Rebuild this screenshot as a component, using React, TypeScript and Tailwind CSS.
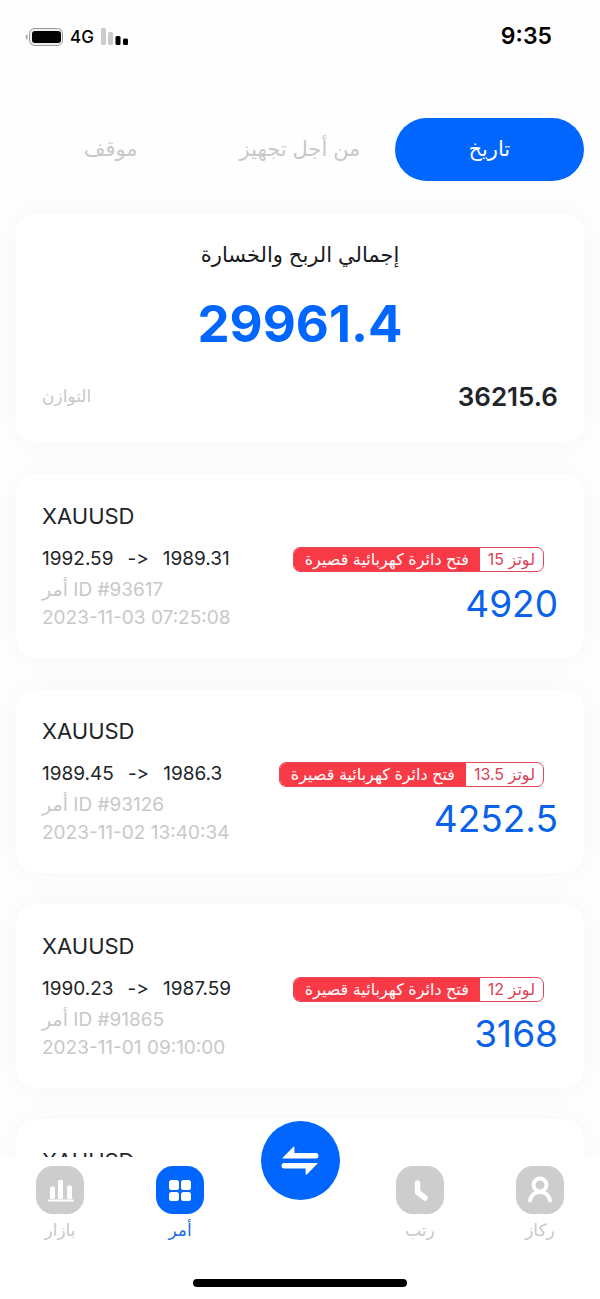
import { useState } from "react";
import type { ReactNode } from "react";

type Order = {
  id: number;
  symbol: string;
  open: string;
  close: string;
  date: string;
  lots: string;
  profit: string;
};

const orders: Order[] = [
  { id: 93617, symbol: "XAUUSD", open: "1992.59", close: "1989.31", date: "2023-11-03 07:25:08", lots: "15", profit: "4920" },
  { id: 93126, symbol: "XAUUSD", open: "1989.45", close: "1986.3", date: "2023-11-02 13:40:34", lots: "13.5", profit: "4252.5" },
  { id: 91865, symbol: "XAUUSD", open: "1990.23", close: "1987.59", date: "2023-11-01 09:10:00", lots: "12", profit: "3168" },
];

const tabs = ["موقف", "من أجل تجهيز", "تاريخ"];

function StatusBar() {
  return (
    <header className="flex h-[73px] shrink-0 items-center justify-between pl-6 pr-12">
      <div className="flex items-center gap-[7px]">
        <svg width="39" height="18" viewBox="0 0 39 18" aria-hidden="true">
          <path d="M3.5 6.5C1 7 1 11 3.5 11.5Z" fill="#999" />
          <rect x="5.5" y="0.5" width="33" height="17" rx="5" fill="#eee" stroke="#999" />
          <rect x="8" y="3" width="29" height="12" rx="3" fill="#000" />
        </svg>
        <span className="text-[17px] font-medium leading-6 text-black">4G</span>
        <svg width="28" height="18" viewBox="0 0 28 18" aria-hidden="true">
          <rect x="0" y="0" width="5" height="17" rx="1.5" fill="#ccc" />
          <rect x="7" y="4" width="5" height="13" rx="1.5" fill="#ccc" />
          <rect x="14.5" y="8" width="5" height="9" rx="1.5" fill="#000" />
          <rect x="22" y="10.5" width="5" height="6.5" rx="1.5" fill="#000" />
        </svg>
      </div>
      <time className="text-[23px] font-semibold text-black">9:35</time>
    </header>
  );
}

function Tabs() {
  const [active, setActive] = useState(2);

  return (
    <div className="mt-[45px] grid shrink-0 grid-cols-3 px-4" role="tablist">
      {tabs.map((label, i) => (
        <button
          key={label}
          type="button"
          role="tab"
          aria-selected={i === active}
          onClick={() => setActive(i)}
          className={`h-[63px] whitespace-nowrap rounded-full pb-[2px] text-[21px] ${
            i === active ? "bg-[#0166fe] text-white" : "text-[#c8c8c8]"
          }`}
        >
          {label}
        </button>
      ))}
    </div>
  );
}

function Card({ children }: { children: ReactNode }) {
  return (
    <section className="shrink-0 rounded-[20px] bg-white px-[26px] shadow-[0_0_32px_rgba(0,0,0,0.04)]">
      {children}
    </section>
  );
}

function Summary() {
  return (
    <Card>
      <div className="flex h-[230px] flex-col pt-6">
        <h1 className="text-center text-[21px] leading-9 text-[#17191c]">إجمالي الربح والخسارة</h1>
        <p className="mt-4 text-center text-[51px] font-bold leading-[70px] text-[#0166fe]">29961.4</p>
        <div className="mt-5 flex items-center justify-between">
          <span className="text-[17px] text-[#c8c8c8]">التوازن</span>
          <span className="text-[26px] font-semibold leading-9 text-[#212529]">36215.6</span>
        </div>
      </div>
    </Card>
  );
}

function Symbol({ name }: { name: string }) {
  return <h2 className="pt-6 text-[22px] leading-9 text-[#212529]">{name}</h2>;
}

function OrderCard({ order }: { order: Order }) {
  return (
    <Card>
      <div className="h-[184px]">
        <Symbol name={order.symbol} />
        <div className="mt-2 flex items-center justify-between pr-[14px] leading-[34px]">
          <p className="whitespace-pre text-[19px] text-[#212529] [font-variant-ligatures:none]">
            {order.open}
            <span className="px-[14px]">-&gt;</span>
            {order.close}
          </p>
          <div dir="rtl" className="flex h-[25px] overflow-hidden rounded-[7px] border border-[#e8475a] text-[16px] leading-[23px]">
            <span className="px-2 text-[#dc4055]">لوتز {order.lots}</span>
            <span className="bg-[#f83a46] px-[11px] text-white">فتح دائرة كهربائية قصيرة</span>
          </div>
        </div>
        <div className="flex items-center justify-between">
          <div className="text-[19px] leading-7 text-[#c8c8c8]">
            <p>أمر ID #{order.id}</p>
            <p>{order.date}</p>
          </div>
          <p className="text-[37px] leading-[56px] text-[#0b62ea]">{order.profit}</p>
        </div>
      </div>
    </Card>
  );
}

function MarketIcon() {
  return (
    <svg width="48" height="48" viewBox="0 0 48 48" fill="#fff" aria-hidden="true">
      <rect x="14" y="20.5" width="5" height="12.5" rx="1.5" />
      <rect x="22" y="14" width="5" height="19" rx="1.5" />
      <rect x="31" y="19.5" width="5" height="13.5" rx="1.5" />
      <rect x="12" y="33.5" width="26" height="2" rx="1" />
    </svg>
  );
}

function GridIcon() {
  return (
    <svg width="48" height="48" viewBox="0 0 48 48" fill="#fff" aria-hidden="true">
      <rect x="13" y="14" width="10" height="10" rx="2.5" />
      <rect x="25" y="14" width="10" height="10" rx="2.5" />
      <rect x="13" y="26" width="10" height="9" rx="2.5" />
      <rect x="25" y="26" width="10" height="9" rx="2.5" />
    </svg>
  );
}

function ClockIcon() {
  return (
    <svg width="48" height="48" viewBox="0 0 48 48" fill="none" aria-hidden="true">
      <path d="M21.5 17V26L29 32" stroke="#fff" strokeWidth="5.5" strokeLinecap="round" strokeLinejoin="round" />
    </svg>
  );
}

function UserIcon() {
  return (
    <svg width="48" height="48" viewBox="0 0 48 48" fill="none" stroke="#fff" strokeWidth="4" strokeLinecap="round" aria-hidden="true">
      <circle cx="24" cy="19" r="6.5" />
      <path d="M14 34.5C16 23 32 23 34 34.5" />
    </svg>
  );
}

function NavItem({ label, icon, active }: { label: string; icon: ReactNode; active?: boolean }) {
  return (
    <a href="#" className={`flex flex-col items-center pt-[9px] ${active ? "text-[#1f6be0]" : "text-[#c8c8c8]"}`}>
      <span className={`size-12 rounded-[17px] ${active ? "bg-[#0166fe]" : "bg-[#cdcdcd]"}`}>{icon}</span>
      <span className="mt-[2px] text-[17px] leading-7">{label}</span>
    </a>
  );
}

function BottomNav() {
  return (
    <nav className="relative shrink-0 bg-white">
      <div className="grid h-[122px] grid-cols-5">
        <NavItem label="بازار" icon={<MarketIcon />} />
        <NavItem label="أمر" icon={<GridIcon />} active />
        <div className="flex justify-center">
          <button
            type="button"
            aria-label="Trade"
            className="-mt-9 flex size-[79px] items-center justify-center rounded-full bg-[#0166fe]"
          >
            <svg width="38" height="30" viewBox="0 0 38 30" fill="#fff" aria-hidden="true">
              <path d="M1 12.5L12.2 1C12.8 0.4 13.4 0.6 13.4 1.4V7H34.700A2.750 2.750 0 0 1 34.700 12.500Z" />
              <path d="M37 17L25.800 28.500C25.200 29.100 24.600 28.900 24.600 28.100V22.500H3.300A2.750 2.750 0 0 1 3.300 17Z" />
            </svg>
          </button>
        </div>
        <NavItem label="رتب" icon={<ClockIcon />} />
        <NavItem label="ركاز" icon={<UserIcon />} />
      </div>
      <div className="mx-auto mb-3 h-2 w-[214px] rounded-full bg-black" />
    </nav>
  );
}

export default function App() {
  return (
    <div className="flex h-screen flex-col overflow-hidden bg-[#fefefe] font-[Inter,'DejaVu_Sans',sans-serif]">
      <StatusBar />
      <Tabs />
      <main className="flex min-h-0 flex-1 flex-col gap-[31px] overflow-hidden px-4 pt-8">
        <Summary />
        {orders.map((order) => (
          <OrderCard key={order.id} order={order} />
        ))}
        <Card>
          <Symbol name="XAUUSD" />
        </Card>
      </main>
      <BottomNav />
    </div>
  );
}
